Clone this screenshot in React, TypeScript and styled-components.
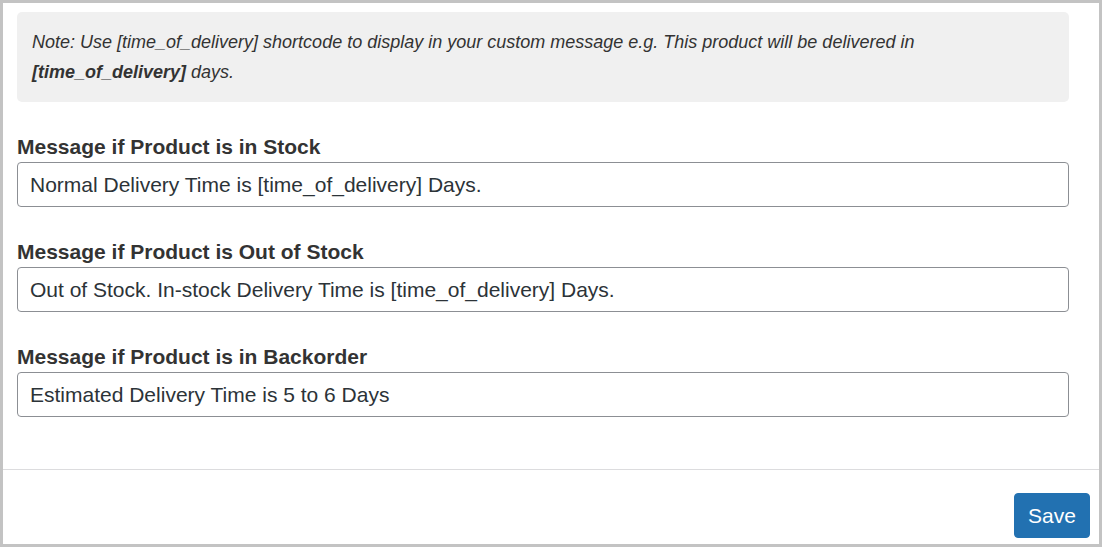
import styled, { createGlobalStyle } from "styled-components";

const GlobalStyle = createGlobalStyle`
  html, body {
    margin: 0;
    padding: 0;
    background: #ffffff;
  }
  * {
    box-sizing: border-box;
  }
`;

const fields = [
  { label: "Message if Product is in Stock", value: "Normal Delivery Time is [time_of_delivery] Days." },
  { label: "Message if Product is Out of Stock", value: "Out of Stock. In-stock Delivery Time is [time_of_delivery] Days." },
  { label: "Message if Product is in Backorder", value: "Estimated Delivery Time is 5 to 6 Days" },
];

export default function App() {
  return (
    <>
      <GlobalStyle />
      <Frame>
        <Body>
          <Note>
            Note: Use [time_of_delivery] shortcode to display in your custom message e.g. This product will be delivered in{" "}
            <strong>[time_of_delivery]</strong> days.
          </Note>
          {fields.map((f) => (
            <FieldGroup key={f.label}>
              <Label>{f.label}</Label>
              <TextInput type="text" defaultValue={f.value} />
            </FieldGroup>
          ))}
        </Body>
        <Footer>
          <SaveButton type="button">Save</SaveButton>
        </Footer>
      </Frame>
    </>
  );
}

const Frame = styled.div`
  width: 1102px;
  height: 547px;
  border: 3px solid #c3c3c3;
  display: flex;
  flex-direction: column;
  font-family: "Liberation Sans", Arial, sans-serif;
  color: #333333;
  overflow: hidden;
`;

const Body = styled.div`
  padding: 9px 30px 52px 14px;
  display: flex;
  flex-direction: column;
`;

const Note = styled.p`
  margin: 0;
  padding: 15px 15px;
  background: #f0f0f0;
  border-radius: 5px;
  font-style: italic;
  font-size: 18px;
  line-height: 30px;
  color: #333333;

  strong {
    font-weight: bold;
  }
`;

const FieldGroup = styled.div`
  margin-top: 33px;
  display: flex;
  flex-direction: column;
`;

const Label = styled.label`
  font-size: 21px;
  font-weight: bold;
  line-height: 24px;
  margin-bottom: 3px;
  color: #333333;
`;

const TextInput = styled.input`
  height: 45px;
  width: 100%;
  padding: 0 12px;
  border: 1px solid #8c8f94;
  border-radius: 4px;
  font-family: "Liberation Sans", Arial, sans-serif;
  font-size: 21px;
  color: #2c3338;
  background: #ffffff;
  outline: none;
`;

const Footer = styled.div`
  flex: 1;
  border-top: 1px solid #dcdcde;
  display: flex;
  justify-content: flex-end;
  align-items: flex-start;
  padding: 23px 9px 0 0;
`;

const SaveButton = styled.button`
  width: 76px;
  height: 45px;
  background: #2271b1;
  border: 1px solid #2271b1;
  border-radius: 4px;
  color: #ffffff;
  font-family: "Liberation Sans", Arial, sans-serif;
  font-size: 21px;
  cursor: pointer;
`;
